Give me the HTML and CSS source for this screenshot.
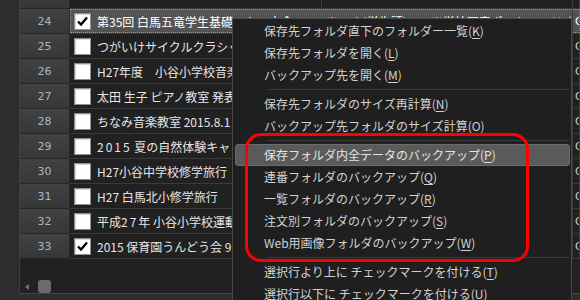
FILE: index.html
```html
<!DOCTYPE html>
<html lang="ja">
<head>
<meta charset="utf-8">
<link rel="stylesheet" href="styles.css">
</head>
<body>
<div class="app">
  <div class="side"></div>
  <div class="grid">
    <div class="rows">
      <div class="row partial">
        <div class="num"></div>
        <div class="title"></div>
        <div class="c3"></div>
        <div class="c4"></div>
      </div>
      <div class="row sel">
        <div class="num">24</div>
        <div class="title"><span class="cb on"><svg viewBox="0 0 15 15"><path d="M3 7.5 L6 10.5 L12 3.5"/></svg></span><span class="txt">第35回 白馬五竜学生基礎スキー大会</span></div>
        <div class="c3">※Web(学生証)Ｌ　※学校写真ポートフォリオ第2回</div>
        <div class="c4">O</div>
      </div>
      <div class="row">
        <div class="num">25</div>
        <div class="title"><span class="cb"></span><span class="txt">つがいけサイクルクラシック<span class="wide">2015</span></span></div>
        <div class="c3"></div>
        <div class="c4">O</div>
      </div>
      <div class="row">
        <div class="num">26</div>
        <div class="title"><span class="cb"></span><span class="txt">H27年度　小谷小学校音楽会</span></div>
        <div class="c3"></div>
        <div class="c4">O</div>
      </div>
      <div class="row">
        <div class="num">27</div>
        <div class="title"><span class="cb"></span><span class="txt">太田 生子 ピアノ教室 発表会</span></div>
        <div class="c3"></div>
        <div class="c4">O</div>
      </div>
      <div class="row">
        <div class="num">28</div>
        <div class="title"><span class="cb"></span><span class="txt">ちなみ音楽教室 2015.8.1</span></div>
        <div class="c3"></div>
        <div class="c4">O</div>
      </div>
      <div class="row">
        <div class="num">29</div>
        <div class="title"><span class="cb"></span><span class="txt"><span class="wide">2015</span> 夏の自然体験キャンプ</span></div>
        <div class="c3"></div>
        <div class="c4">O</div>
      </div>
      <div class="row">
        <div class="num">30</div>
        <div class="title"><span class="cb"></span><span class="txt">H27小谷中学校修学旅行</span></div>
        <div class="c3"></div>
        <div class="c4">O</div>
      </div>
      <div class="row">
        <div class="num">31</div>
        <div class="title"><span class="cb"></span><span class="txt">H27 白馬北小修学旅行</span></div>
        <div class="c3"></div>
        <div class="c4">O</div>
      </div>
      <div class="row">
        <div class="num">32</div>
        <div class="title"><span class="cb"></span><span class="txt">平成<span class="wide">27</span>年 小谷小学校運動会</span></div>
        <div class="c3"></div>
        <div class="c4">O</div>
      </div>
      <div class="row">
        <div class="num">33</div>
        <div class="title"><span class="cb on"><svg viewBox="0 0 15 15"><path d="M3 7.5 L6 10.5 L12 3.5"/></svg></span><span class="txt">2015 保育園うんどう会 9.19</span></div>
        <div class="c3"></div>
        <div class="c4">O</div>
      </div>
    </div>
    <div class="empty">
      <div class="hscroll">
        <span class="arrow"></span>
        <span class="thumb"></span>
      </div>
    </div>
  </div>

  <div class="menu">
    <div class="item">保存先フォルダ直下のフォルダー一覧(<u>K</u>)</div>
    <div class="item">保存先フォルダを開く(<u>L</u>)</div>
    <div class="item">バックアップ先を開く(<u>M</u>)</div>
    <div class="sep"></div>
    <div class="item">保存先フォルダのサイズ再計算(<u>N</u>)</div>
    <div class="item">バックアップ先フォルダのサイズ計算(<u>O</u>)</div>
    <div class="sep"></div>
    <div class="item hot">保存フォルダ内全データのバックアップ(<u>P</u>)</div>
    <div class="item">連番フォルダのバックアップ(<u>Q</u>)</div>
    <div class="item">一覧フォルダのバックアップ(<u>R</u>)</div>
    <div class="item">注文別フォルダのバックアップ(<u>S</u>)</div>
    <div class="item">Web用画像フォルダのバックアップ(<u>W</u>)</div>
    <div class="sep"></div>
    <div class="item">選択行より上に チェックマークを付ける(<u>T</u>)</div>
    <div class="item">選択行以下に チェックマークを付ける(<u>U</u>)</div>
  </div>

  <div class="annot"></div>
</div>
</body>
</html>
```

FILE: styles.css
```css
html, body {
  margin: 0;
  padding: 0;
}
body {
  width: 580px;
  height: 300px;
  overflow: hidden;
  background: #2d2d2d;
  font-family: "Noto Sans CJK JP", "Noto Sans", sans-serif;
}
.app {
  position: relative;
  display: flex;
  width: 580px;
  height: 300px;
  overflow: hidden;
}
.side {
  flex: none;
  width: 19px;
  background: #2d2d2d;
}
.grid {
  flex: 1;
  display: flex;
  flex-direction: column;
  height: 294px;
  box-sizing: border-box;
  border-left: 1px solid #3e3e3e;
  border-bottom: 1px solid #454545;
  background: #212121;
  overflow: hidden;
}
.rows {
  margin-top: -16px;
  flex: none;
}
.row {
  position: relative;
  display: grid;
  grid-template-columns: 50px 252px 251px 1fr;
  height: 25px;
}
.row > div {
  box-sizing: border-box;
  border-right: 1px solid #3a3a3a;
  border-bottom: 1px solid #3a3a3a;
  overflow: hidden;
  white-space: nowrap;
}
.num {
  display: flex;
  align-items: center;
  justify-content: center;
  background: linear-gradient(#424242, #373737);
  color: #aab6c4;
  font-family: "DejaVu Sans", sans-serif;
  font-size: 11px;
  border-right-color: #272727 !important;
  border-bottom-color: #272727 !important;
}
.title {
  display: flex;
  align-items: center;
  gap: 6px;
  padding-left: 4px;
  color: #e6e6e6;
  font-size: 12px;
}
.wide {
  letter-spacing: 2px;
}
.c3 {
  display: flex;
  align-items: center;
  padding-left: 4px;
  color: #e6e6e6;
  font-size: 12px;
}
.c4 {
  display: flex;
  align-items: center;
  padding-left: 2px;
  color: #c9c9c9;
  font-family: "DejaVu Sans", sans-serif;
  font-size: 11px;
}
.cb {
  flex: none;
  width: 17px;
  height: 17px;
  box-sizing: border-box;
  border: 1px solid #8e8e8e;
  background: #ffffff;
  box-shadow: inset 1px 1px 0 #d8d8d8;
  display: flex;
}
.cb svg {
  width: 15px;
  height: 15px;
}
.cb svg path {
  fill: none;
  stroke: #000;
  stroke-width: 2.4;
}
.row.sel .title,
.row.sel .c3,
.row.sel .c4 {
  background: #535353;
  color: #ffffff;
}
.row.sel .title {
  overflow: visible;
  border-right-color: #535353;
}
.row.sel::after {
  content: "";
  position: absolute;
  left: 50px;
  right: 0;
  top: 0;
  bottom: 1px;
  border: 1px dotted #9a9a9a;
  pointer-events: none;
}
.empty {
  flex: 1;
  display: flex;
  flex-direction: column;
  justify-content: flex-end;
}
.hscroll {
  display: flex;
  align-items: center;
  height: 13px;
  padding-left: 5px;
}
.arrow {
  width: 0;
  height: 0;
  border-top: 3px solid transparent;
  border-bottom: 3px solid transparent;
  border-right: 4px solid #727272;
}
.thumb {
  margin-left: 9px;
  width: 13px;
  height: 13px;
  border-radius: 3px;
  background: #6b6b6b;
}
.menu {
  position: absolute;
  left: 232px;
  top: 18px;
  width: 340px;
  height: 282px;
  overflow: hidden;
  box-sizing: border-box;
  padding-top: 1px;
  background: #1f1f1f;
  border: 1px solid #4a4a4a;
  border-bottom: none;
}
.item {
  height: 22px;
  box-sizing: border-box;
  margin: 0 1px 0 2px;
  padding-left: 28px;
  border: 1px solid transparent;
  border-radius: 3px;
  line-height: 20px;
  font-size: 12px;
  color: #d2d2d2;
  white-space: nowrap;
}
.item u {
  text-underline-offset: 2px;
}
.item.hot {
  background: #5a5a5a;
  border-color: #6c6c6c;
  color: #e4e4e4;
}
.sep {
  height: 7px;
  display: flex;
  align-items: center;
  padding-left: 35px;
  padding-right: 2px;
}
.sep::before {
  content: "";
  flex: 1;
  height: 1px;
  background: #3b3b3b;
}
.annot {
  position: absolute;
  left: 245px;
  top: 133px;
  width: 284px;
  height: 129px;
  box-sizing: border-box;
  border: 3px solid #ff0000;
  border-radius: 16px;
  pointer-events: none;
}
```
